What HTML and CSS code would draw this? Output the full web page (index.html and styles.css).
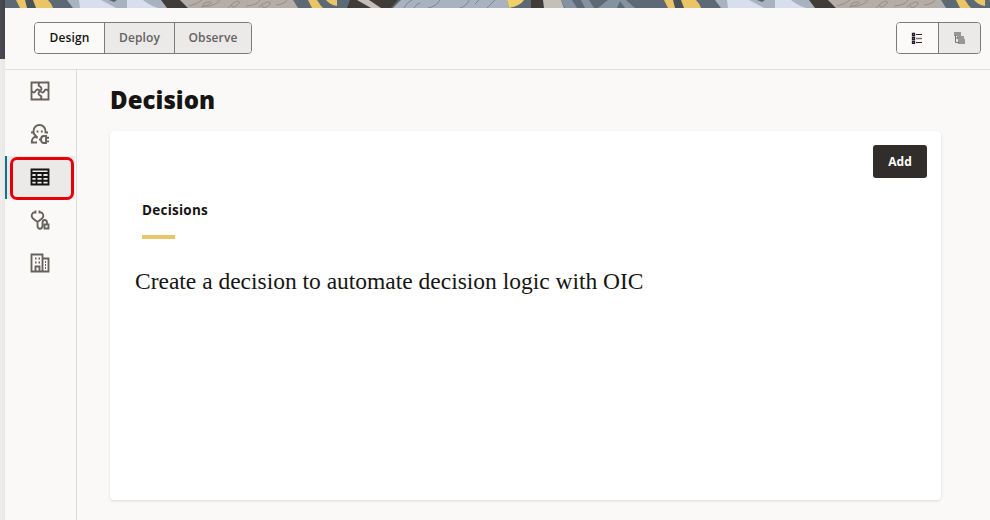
FILE: index.html
```html
<!DOCTYPE html>
<html lang="en">
<head>
<meta charset="utf-8">
<title>Decision</title>
<link rel="stylesheet" href="styles.css">
</head>
<body>
<div class="shell">
  <div class="edge"><div class="edge-dark"></div></div>
  <div class="app">
    <svg class="banner" width="985" height="8" viewBox="5 0 985 8" aria-hidden="true">
      <defs>
        <g id="tile">
          <path fill="#5d6a75" d="M0 0H648V8H0z"/>
          <path fill="#4b5257" d="M25 0h9l3 8h-10z"/>
          <path fill="#e9c565" d="M16 0h9l2 8h-7zM33 0h15q4 4 5 8H36zM308 0h9q3 5 6 8h-11zM326 0h11v6q-7-1-11-6z"/>
          <path fill="#a9b2bf" d="M67 0H163L168 8H73z"/>
          <path fill="#d7deed" d="M79 0h22l15 8H80zM127 0h16q6 5 15 8h-31z"/>
          <path fill="#59636e" d="M109 0h8l-3 2z"/>
          <path fill="#403c39" d="M161 0h19l8 8h-21z"/>
          <path fill="#b5aea8" d="M180 0H293L298 8H188z"/>
          <path fill="none" stroke="#948e89" stroke-width="1" d="M189 6q9-2 13-6M201 7c8-2 15-6 7-5-6 1-8 5 1 4 9-2 15-8 8-6M228 8c7-8 13-8 11-5-3 5-9 5-7 2M246 6q12-1 14-6M259 7c6-6 13-6 11-3-4 5-10 4-7 1M276 5q9-1 11-5"/>
          <path fill="#403c39" d="M350 0h48l-7 8h-44z"/>
          <path fill="#c5beb7" d="M357 0h12l12 8h-10z"/>
          <path fill="#a9b2bf" d="M401 0H507L509 8H393z"/>
          <path fill="none" stroke="#7b8796" d="M404 8q3-6 8-8M414 8q3-5 6-5M428 8q9-2 12-8M460 8q7-2 9-8M475 4l4-4M487 8l8-8"/>
          <path fill="#f0cf6d" d="M507 0h17q-4 6-15 8z"/>
          <path fill="#403c39" d="M531 0h13v8h-13z"/>
          <path fill="#c4bfb9" d="M543 0h18l3 8h-20z"/>
          <path fill="#8592a2" d="M561 0h11l5 8h-12zM581 0h8l5 8h-9zM598 8l10-8h18l9 8h-10l-5-7-3 7z"/>
        </g>
      </defs>
      <use href="#tile"/>
      <use href="#tile" x="648"/>
    </svg>
    <header class="topbar">
      <nav class="segments">
        <button class="segment selected">Design</button>
        <button class="segment">Deploy</button>
        <button class="segment wide">Observe</button>
      </nav>
      <div class="segments views">
        <button class="view selected" aria-label="List view">
          <svg width="12" height="12" viewBox="0 0 12 12" fill="none"><path stroke="#241b2d" stroke-width="1.300" d="M1.500 1.500h2v2h-2zM1.500 5.500h2v2h-2zM1.500 9.500h2v2h-2z"/><path stroke="#272326" d="M5 2.500h6M5 10.500h6"/><path stroke="#77706e" stroke-width="1.600" d="M5 6.500h6"/></svg>
        </button>
        <button class="view" aria-label="Tree view">
          <svg width="12" height="12" viewBox="0 0 12 12"><path fill="#989795" d="M1 0h7v4H1zM4 4h7v3H4zM5 7h7v5H5z"/><path fill="none" stroke="#777572" d="M2.500 3v7.500H6M2.500 6H5"/></svg>
        </button>
      </div>
    </header>
    <div class="workspace">
      <aside class="sidebar">
        <a class="item" aria-label="Integrations"><svg class="icon" viewBox="0 0 20 20"><path d="M1.500 1.500h17v17h-17zM10 1.500q-3 3 0 4 3 2 0 4.500M10 18.500q3-3 0-4-3-2 0-4.500M1.500 10q3 3 4 0 2-3 4.500 0M18.500 10q-3-3-4 0-2 3-4.500 0"/></svg></a>
        <a class="item" aria-label="Robots"><svg class="icon" viewBox="0 0 20 20"><path d="M1 8.500h2.500V7a6 6 0 0 1 12 0v1.500H18M4 8.500v1.500l2 2M7.500 6.500v2M11.800 6.500v2M7 12.500c-4 .3-5.200 2-5.200 6H7M6.800 12v2.500M9 15.500h2M16 12h-2q-3 0-3 3.500t3 3.500h2zM16 13.700h3M16 17.300h3"/></svg></a>
        <a class="item current" aria-label="Decisions"><svg class="icon" viewBox="0 0 20 20"><path d="M1.500 2.500h17v15h-17zM1.500 6h17M1.500 10h17M1.500 13.700h17M6.500 6v11.500M12.500 6v11.500"/></svg></a>
        <a class="item" aria-label="Healthcare"><svg class="icon" viewBox="0 0 20 20"><path d="M5.500 2C1.500 2.500.5 6 3 8.500L7.500 12 12 8.500c2.500-2.500 1.500-6-2.500-6.500M5.500.5v3M9.500.5v3M7.500 12v3.500c0 4.300 5 4.300 5 0V13c0-4 4.500-4 4.500 0v1.500M14.500 14.500h4v4h-4z"/></svg></a>
        <a class="item" aria-label="B2B"><svg class="icon" viewBox="0 0 20 20"><path d="M1.500 1.500h11v17h-11zM12.500 5.500h6v13h-6zM5.500 18.500v-5h4v5M5 5.500h1.500M8.500 5.500H10M5 9.500h1.500M8.500 9.500H10M15 9h1M15 12h1M15 15h1"/></svg></a>
      </aside>
      <main class="content">
        <h1>Decision</h1>
        <section class="card">
          <div class="actions"><button class="add">Add</button></div>
          <h2>Decisions</h2>
          <div class="accent"></div>
          <p class="empty">Create a decision to automate decision logic with OIC</p>
        </section>
      </main>
    </div>
  </div>
</div>
</body>
</html>
```
FILE: styles.css
```css
*, *::after { box-sizing: border-box; }
body { margin: 0; background: #faf9f7; color: #161513; font-family: "Open Sans", "Noto Sans", sans-serif; }
button { margin: 0; padding: 0; border: 0; font: inherit; }
.shell { display: flex; height: 520px; overflow: hidden; }
.edge { width: 5px; flex: none; background: linear-gradient(90deg, #efeeec, #e8e7e5); }
.edge-dark { height: 59px; background: linear-gradient(90deg, #4a4b52, #424349); }
.app { width: 985px; display: flex; flex-direction: column; }
.banner { display: block; flex: none; }
.topbar { height: 62px; flex: none; display: flex; justify-content: space-between; align-items: flex-start; padding: 14px 9px 0 29px; border-bottom: 1px solid #dfdedc; }
.segments { display: flex; width: 218px; height: 32px; border: 1px solid #7d7b78; border-radius: 4px; overflow: hidden; background: #ebeae8; }
.segment { width: 70px; background: #ebeae8; color: #656360; font-size: 12px; font-weight: 600; letter-spacing: .1px; line-height: 30px; border-right: 1px solid #7d7b78; }
.segment.wide { width: 76px; border-right: 0; }
.segment.selected, .view.selected { background: #fbfaf8; color: #161513; }
.views { width: 85px; }
.view { width: 41px; display: flex; align-items: center; justify-content: center; background: #ebeae8; padding-right: 1px; }
.view.selected { width: 42px; border-right: 1px solid #7d7b78; }
.workspace { flex: 1; display: flex; }
.sidebar { width: 72px; border-right: 1px solid #dfdedc; }
.item { height: 43px; width: 70px; display: flex; align-items: center; justify-content: center; padding-bottom: 2px; color: #66625e; }
.icon { width: 20px; height: 20px; fill: none; stroke: currentColor; stroke-width: 1.85; }
.current { position: relative; background: #ebeae8; border-left: 2px solid #0c7290; padding-right: 2px; color: #161513; }
.current::after { content: ""; position: absolute; left: 3px; top: 1px; width: 64px; height: 43px; border: 3px solid #e60008; border-radius: 7px; }
.content { flex: 1; padding: 12px 49px 0 33px; }
h1 { margin: 0; height: 49px; font-size: 24px; line-height: 35px; font-weight: 800; letter-spacing: .05px; }
.card { height: 369px; background: #fff; border-radius: 4px; box-shadow: 0 1px 3px rgba(0,0,0,.13); padding: 14px 14px 0 25px; }
.actions { display: flex; justify-content: flex-end; }
.add { width: 54px; height: 33px; border-radius: 3px; background: #312d2a; color: #fff; font-size: 12px; font-weight: 700; }
h2 { margin: 22px 0 0 7px; height: 35px; font-size: 13.5px; line-height: 20px; font-weight: 700; letter-spacing: .25px; }
.accent { width: 33px; height: 4px; margin-left: 7px; background: #e9c769; }
.empty { margin: 27px 0 0; font-family: Georgia, "Liberation Serif", serif; font-size: 23.5px; line-height: 30px; letter-spacing: -.01px; white-space: nowrap; }
```
